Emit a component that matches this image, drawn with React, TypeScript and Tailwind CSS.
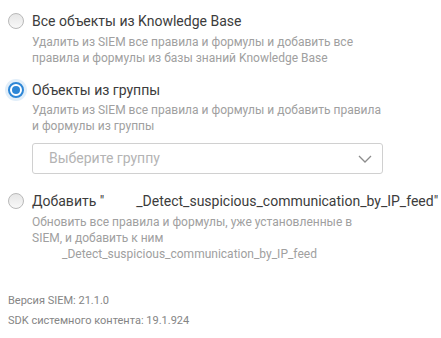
function Radio({ checked }: { checked?: boolean }) {
  if (checked) {
    return (
      <span className="mt-[2px] flex h-[16px] w-[16px] shrink-0 items-center justify-center rounded-full border-2 border-[#2d86d6] bg-white shadow-[0_0_0_3px_rgba(45,134,214,0.14)]">
        <span className="h-[8px] w-[8px] rounded-full bg-[#2d86d6]" />
      </span>
    );
  }
  return (
    <span className="mt-[2px] h-[16px] w-[16px] shrink-0 rounded-full border border-[#b9b9b9] bg-gradient-to-b from-[#e6e6e6] to-[#f8f8f8]" />
  );
}

export default function App() {
  return (
    <div className="h-[338px] w-[441px] overflow-hidden bg-white pl-2 pt-[11px] font-['Roboto',sans-serif]">
      <div className="flex gap-2">
        <Radio />
        <div>
          <div className="text-[14px] leading-[20px] text-[#3c3c3c]">Все объекты из Knowledge Base</div>
          <p className="mt-[3px] text-[12px] leading-[16px] text-[#a0a0a0]">
            Удалить из SIEM все правила и формулы и добавить все
            <br />
            правила и формулы из базы знаний Knowledge Base
          </p>
        </div>
      </div>

      <div className="mt-[14px] flex gap-2">
        <Radio checked />
        <div>
          <div className="text-[14px] leading-[20px] text-[#3c3c3c]">Объекты из группы</div>
          <p className="mt-[2px] text-[12px] leading-[16px] text-[#a0a0a0]">
            Удалить из SIEM все правила и формулы и добавить правила
            <br />
            и формулы из группы
          </p>
          <div className="mt-[9px] flex h-[31px] w-[351px] items-center justify-between rounded-[3px] border border-[#d0d0d0] pl-4 pr-[10px]">
            <span className="text-[14px] text-[#b4b4b4]">Выберите группу</span>
            <svg width="14" height="8" viewBox="0 0 14 8" fill="none">
              <path d="M1 1l6 6 6-6" stroke="#8c8c8c" strokeWidth="1.3" />
            </svg>
          </div>
        </div>
      </div>

      <div className="mt-[17px] flex gap-2">
        <Radio />
        <div>
          <div className="whitespace-nowrap text-[14px] leading-[20px] text-[#3c3c3c]">
            Добавить "<span className="inline-block w-[32px]" />_Detect_suspicious_communication_by_IP_feed"
          </div>
          <p className="mt-[3px] text-[12px] leading-[16px] text-[#a0a0a0]">
            Обновить все правила и формулы, уже установленные в
            <br />
            SIEM, и добавить к ним
            <br />
            <span className="inline-block w-[30px]" />_Detect_suspicious_communication_by_IP_feed
          </p>
        </div>
      </div>

      <div className="mt-[29px] text-[11px] leading-[20px] text-[#858585]">
        <div>Версия SIEM: 21.1.0</div>
        <div>SDK системного контента: 19.1.924</div>
      </div>
    </div>
  );
}
